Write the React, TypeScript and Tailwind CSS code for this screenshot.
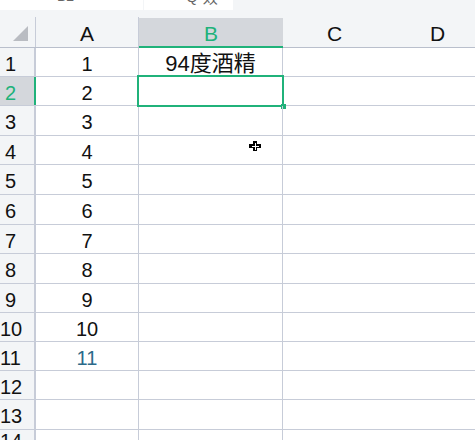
import React from 'react';

const FONT = { fontFamily: '"Liberation Sans", Arial, "Noto Sans CJK SC", sans-serif' };

const rowHeights = [29, 29, 30, 29, 30, 30, 29, 30, 29, 29, 29, 29, 30, 20];
const colA: Record<number, string> = {
  1: '1', 2: '2', 3: '3', 4: '4', 5: '5', 6: '6', 7: '7', 8: '8', 9: '9', 10: '10', 11: '11',
};

const Cursor = () => (
  <svg width="12" height="10" viewBox="0 0 12 10" className="absolute left-[249px] top-[141px]" shapeRendering="crispEdges">
    <path d="M4 0h4v3h4v4h-4v3h-4v-3h-4v-4h4z" fill="#000" />
    <path d="M5.5 1.5h1v3h3v1h-3v3h-1v-3h-3v-1h3z" fill="#fff" />
  </svg>
);

const Row = ({ n, h }: { n: number; h: number }) => {
  const sel = n === 2;
  return (
    <div className="flex border-b border-[#c7ccd8] box-border" style={{ height: h }}>
      <div
        className={`w-[36px] shrink-0 border-r-2 flex items-center text-[20px] leading-none pt-[3px] ${
          sel ? 'bg-[#d4d7dc] text-[#20b27a] border-[#20b27a]' : 'bg-[#f3f5f7] text-[#111] border-[#c7ccd8] border-r'
        } ${n < 10 ? 'pl-[5px]' : 'pl-[0px]'}`}
      >
        {n}
      </div>
      <div
        className={`w-[103px] shrink-0 border-r border-[#c7ccd8] flex items-center justify-center text-[20px] leading-none pt-[3px] ${
          n === 11 ? 'text-[#2c6a8a]' : 'text-[#111]'
        }`}
      >
        {colA[n] ?? ''}
      </div>
      <div className="w-[144px] shrink-0 border-r border-[#c7ccd8] relative flex items-center justify-center text-[22px] leading-none pt-[3px] text-[#111]">
        {n === 1 ? '94度酒精' : ''}
        {sel && (
          <div className="absolute left-[-2px] top-[-2px] w-[147px] h-[32px] border-2 border-[#20b27a]">
            <div className="absolute right-[-4px] bottom-[-4px] w-[5px] h-[5px] bg-[#20b27a]" />
          </div>
        )}
      </div>
      <div className="flex-1" />
    </div>
  );
};

export default function App() {
  return (
    <div className="w-[475px] h-[440px] overflow-hidden bg-white relative" style={FONT}>
      <div className="h-[17px] bg-[#f3f5f7] flex items-start">
        <div className="w-[143px] h-[10px] bg-white overflow-hidden text-[14px] text-[#666] leading-none">
          <div className="mt-[-11px] pl-[57px]">B2</div>
        </div>
        <div className="w-[89px] h-[10px] ml-[1px] bg-white overflow-hidden text-[15px] text-[#666] leading-none flex items-start">
          <div className="mt-[-11px] pl-[42px] flex gap-[5px]">
            <span>Q</span>
            <span style={{ fontFamily: '"Noto Sans CJK SC", sans-serif' }}>效</span>
          </div>
        </div>
      </div>
      <div className="flex h-[31px] bg-[#f3f5f7] border-b border-[#b9bfcc] text-[21px] leading-none">
        <div className="w-[36px] shrink-0 border-r border-[#c7ccd8] relative">
          <div className="absolute right-[7px] bottom-[6px] w-0 h-0 border-l-[15px] border-l-transparent border-b-[15px] border-b-[#b9bcc2]" />
        </div>
        <div className="w-[103px] shrink-0 border-r border-[#c7ccd8] flex items-center justify-center pt-[3px] text-[#111]">A</div>
        <div className="w-[144px] shrink-0 mt-[1px] mb-[-1px] bg-[#d4d7dc] border-b-2 border-[#20b27a] flex items-center justify-center pt-[3px] text-[#20b27a]">B</div>
        <div className="w-[103px] shrink-0 flex items-center justify-center pt-[3px] text-[#111]">C</div>
        <div className="w-[103px] shrink-0 flex items-center justify-center pt-[3px] text-[#111]">D</div>
      </div>
      {rowHeights.map((h, i) => (
        <Row key={i} n={i + 1} h={h} />
      ))}
      <Cursor />
    </div>
  );
}
